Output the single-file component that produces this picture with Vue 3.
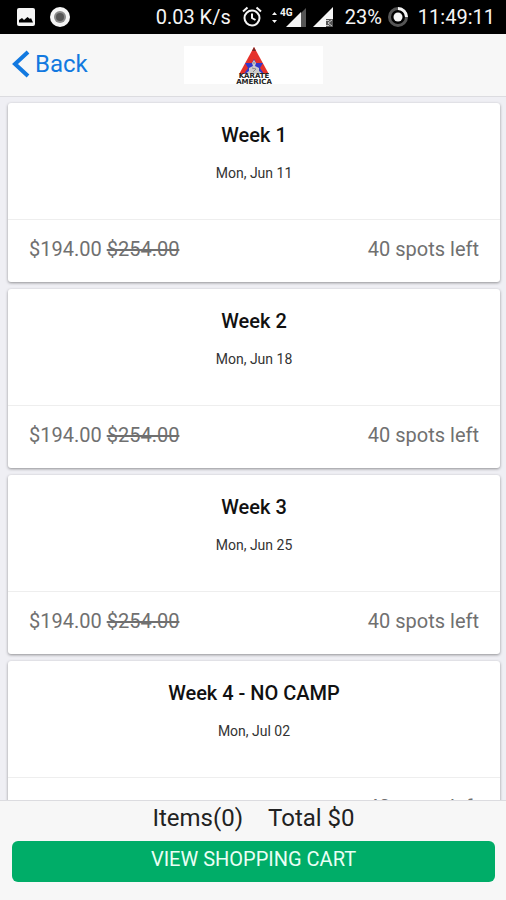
<template>
    <div class="app">
        <div class="status-bar">
            <div class="status-group">
                <svg width="20" height="20" viewBox="0 0 20 20">
                    <rect x="1" y="1" width="18" height="18" rx="2" fill="#f5f5f5" />
                    <path d="M3 15.500 3 13 6 11 8 13 11.500 10 14 12 15 11 17 15.500Z" fill="#000" />
                </svg>
                <svg width="22" height="22" viewBox="0 0 22 22">
                    <circle cx="11" cy="11" r="10" fill="#f5f5f5" />
                    <circle cx="11" cy="11" r="6" fill="#8a8a8a" />
                    <circle cx="11" cy="11" r="4" fill="#555" />
                </svg>
            </div>
            <div class="status-group right">
                <span>0.03 K/s</span>
                <svg class="alarm" width="20" height="22" viewBox="0 0 20 22" fill="none" stroke="#f5f5f5" stroke-width="2">
                    <circle cx="10" cy="12" r="7.500" />
                    <path d="M10 7.500V12L13.500 14M1 5.500 5.500 1.500M19 5.500 14.500 1.500" />
                </svg>
                <svg class="signal" width="36" height="22" viewBox="0 0 36 22">
                    <path d="M1 9 3.500 6 6 9ZM1 14 3.500 17 6 14Z" fill="#f5f5f5" />
                    <text x="9" y="10" class="network">4G</text>
                    <path d="M35 2V21H30V7Z" fill="#555" />
                    <path d="M30 6V21H15Z" fill="#f5f5f5" />
                </svg>
                <svg class="signal-two" width="22" height="22" viewBox="0 0 22 22">
                    <path d="M21 1V21H1Z" fill="#f5f5f5" />
                    <path d="M14 13H21V21H14Z" fill="#555" />
                    <path d="M20 14 16 17 20 20M14 14.500H17M14 19.500H17" fill="none" stroke="#ccc" />
                </svg>
                <span class="percent">23%</span>
                <svg class="battery" width="22" height="22" viewBox="0 0 22 22" fill="none" stroke-width="3">
                    <circle cx="11" cy="11" r="8.500" stroke="#555" />
                    <path d="M11 2.500A8.500 8.500 0 0 1 19.500 11" stroke="#f5f5f5" />
                    <circle cx="11" cy="11" r="4.500" fill="#f5f5f5" />
                </svg>
                <span>11:49:11</span>
            </div>
        </div>

        <header class="toolbar">
            <button type="button" class="back">
                <svg width="18" height="28" viewBox="0 0 18 28" fill="none" stroke="#1279e0" stroke-width="4">
                    <path d="M16 2 3 14 16 26" />
                </svg>
                Back
            </button>
            <div class="logo">
                <svg width="44" height="38" viewBox="0 0 44 38" role="img" aria-label="Karate America">
                    <path d="M22 1 39 32H5Z" fill="#e5322b" />
                    <path d="M22 1 24 5H20Z" fill="#7d2826" />
                    <path d="M22 13 24 17H31L28 22 32 28H12L16 22 13 17H20Z" fill="#3338ca" />
                    <path d="M22 14 24 17 23 20 27 22 27 25 31 28H13L17 25 17 22 21 20 20 17Z" fill="#ccc" />
                    <path d="M21 17H23M20 22 24 23 21 26" fill="none" stroke="#888" />
                    <path d="M6 28H38L41 38H3Z" fill="#fff" />
                    <text class="logo-text">
                        <tspan x="22" y="32">KARATE</tspan>
                        <tspan x="22" y="38">AMERICA</tspan>
                    </text>
                </svg>
            </div>
        </header>

        <main class="content">
            <article v-for="week in weeks" :key="week.title" class="card">
                <div class="card-body">
                    <h2>{{ week.title }}</h2>
                    <p>{{ week.date }}</p>
                </div>
                <div class="card-footer">
                    <span>{{ week.price }} <s>{{ week.oldPrice }}</s></span>
                    <span>{{ week.spots }} spots left</span>
                </div>
            </article>
        </main>

        <footer class="cart">
            <div class="summary">
                <span>Items({{ items }})</span>
                <span>Total ${{ total }}</span>
            </div>
            <button type="button" class="view-cart">VIEW SHOPPING CART</button>
        </footer>
    </div>
</template>

<script setup>
import { ref } from 'vue';

const weeks = [
    { title: 'Week 1', date: 'Mon, Jun 11', price: '$194.00', oldPrice: '$254.00', spots: 40 },
    { title: 'Week 2', date: 'Mon, Jun 18', price: '$194.00', oldPrice: '$254.00', spots: 40 },
    { title: 'Week 3', date: 'Mon, Jun 25', price: '$194.00', oldPrice: '$254.00', spots: 40 },
    { title: 'Week 4 - NO CAMP', date: 'Mon, Jul 02', price: '', oldPrice: '', spots: 40 }
];

const items = ref(0);
const total = ref(0);
</script>

<style>
body {
    margin: 0;
    background: #efeff4;
}
</style>

<style scoped>
.app {
    display: flex;
    flex-direction: column;
    height: 100vh;
    font-family: Roboto, sans-serif;
    background: #efeff4;
}

.status-bar {
    display: flex;
    align-items: center;
    justify-content: space-between;
    flex: none;
    height: 34px;
    padding: 0 11px 0 16px;
    box-sizing: border-box;
    background: #000;
    color: #f5f5f5;
    font-size: 20px;
}

.status-group {
    display: flex;
    align-items: center;
    gap: 13px;
}

.status-group.right {
    gap: 0;
}

.alarm {
    margin-left: 11px;
}

.signal {
    margin-left: 9px;
}

.signal-two {
    margin-left: 5px;
}

.percent {
    margin-left: 11px;
}

.battery {
    margin: 0 9px 0 5px;
}

.network {
    font-size: 10px;
    font-weight: 700;
    fill: #f5f5f5;
}

.toolbar {
    display: grid;
    grid-template-columns: 1fr auto 1fr;
    align-items: center;
    flex: none;
    height: 63px;
    padding: 0 11px 0 12px;
    box-sizing: border-box;
    border-bottom: 1px solid #dcdce0;
    background: #f7f7f7;
}

.back {
    display: flex;
    align-items: center;
    justify-self: start;
    gap: 5px;
    padding: 0 0 2px;
    border: 0;
    background: none;
    color: #1279e0;
    font-family: inherit;
    font-size: 24px;
    line-height: 30px;
    cursor: pointer;
}

.logo {
    display: flex;
    justify-content: center;
    width: 139px;
    height: 38px;
    background: #fff;
}

.logo-text {
    font-family: 'DejaVu Sans', sans-serif;
    font-size: 7px;
    font-weight: 700;
    text-anchor: middle;
    fill: #222;
}

.content {
    display: flex;
    flex-direction: column;
    flex: 1;
    gap: 7px;
    min-height: 0;
    padding: 6px 6px 6px 8px;
    overflow-y: auto;
    scrollbar-width: none;
}

.card {
    flex: none;
    border-radius: 3px;
    background: #fff;
    box-shadow: 0 1px 3px rgba(0, 0, 0, 0.4);
}

.card-body {
    padding: 19px 20px 35px;
    text-align: center;
}

.card-body h2 {
    margin: 0;
    color: #111;
    font-size: 20px;
    font-weight: 500;
    line-height: 26px;
}

.card-body p {
    margin: 14px 0 0;
    color: #333;
    font-size: 14px;
    line-height: 22px;
}

.card-footer {
    display: flex;
    justify-content: space-between;
    padding: 16px 21px 20px;
    border-top: 1px solid #eee;
    color: #707070;
    font-size: 20px;
    line-height: 26px;
}

.cart {
    flex: none;
    padding: 2px 11px 18px 12px;
    border-top: 1px solid #dcdce0;
    background: #f7f7f7;
}

.summary {
    display: flex;
    justify-content: center;
    gap: 25px;
    margin-bottom: 8px;
    color: #222;
    font-size: 24px;
    line-height: 30px;
}

.view-cart {
    display: block;
    width: 100%;
    height: 41px;
    padding: 0 0 6px;
    border: 0;
    border-radius: 6px;
    background: #00ad68;
    color: #eafff5;
    font-family: inherit;
    font-size: 20px;
    cursor: pointer;
}
</style>
